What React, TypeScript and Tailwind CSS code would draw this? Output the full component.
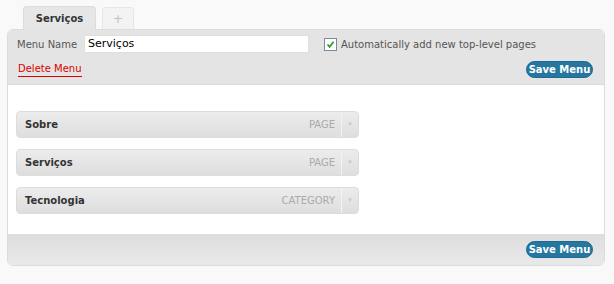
import React from "react";

const ITEMS = [
  { title: "Sobre", type: "PAGE" },
  { title: "Serviços", type: "PAGE" },
  { title: "Tecnologia", type: "CATEGORY" },
];

const SaveButton: React.FC = () => (
  <button className="h-[17px] w-[67px] whitespace-nowrap rounded-full border border-[#1d6a8e] bg-[#2577a0] text-[10px] font-bold leading-none text-white">
    Save Menu
  </button>
);

const MenuItem: React.FC<{ title: string; type: string }> = ({ title, type }) => (
  <div className="flex h-[27px] w-[343px] items-center rounded-[4px] border border-[#dcdcdc] bg-gradient-to-b from-[#ececec] to-[#dedede]">
    <span className="flex-1 pl-[8px] text-[10px] font-bold text-[#333]">{title}</span>
    <span className="pr-[6px] text-[10px] text-[#aaa]">{type}</span>
    <div className="flex h-full w-[17px] items-center justify-center border-l border-[#f3f3f3] text-[7px] text-[#c8c8c8]">
      ▾
    </div>
  </div>
);

const App: React.FC = () => {
  return (
    <div className="h-[284px] w-[614px] bg-[#f9f9f9] pt-[6px] font-['DejaVu_Sans',Verdana,sans-serif]">
      {/* tabs */}
      <div className="flex items-end gap-[6px] pl-[23px]">
        <div className="relative z-10 -mb-px flex h-[24px] w-[73px] items-center justify-center rounded-t-[4px] border border-b-0 border-[#dcdcdc] bg-[#e6e6e6] text-[10px] font-bold text-[#333]">
          Serviços
        </div>
        <div className="flex h-[22px] w-[32px] items-center justify-center rounded-t-[4px] border border-b-0 border-[#e6e6e6] bg-[#f3f3f3] text-[13px] text-[#c4c4c4]">
          +
        </div>
      </div>

      {/* menu box */}
      <div className="ml-[7px] w-[598px] overflow-hidden rounded-[6px] border border-[#dcdcdc] bg-white">
        <div className="h-[54px] bg-[#e4e4e4] px-[9px] pt-[5px]">
          <div className="flex items-center">
            <label className="w-[67px] text-[10px] text-[#555]">Menu Name</label>
            <div className="flex h-[18px] w-[225px] items-center border border-[#dfdfdf] bg-white pl-[3px] text-[11px] text-black">
              Serviços
            </div>
            <div className="ml-[15px] flex items-center">
              <div className="flex h-[13px] w-[13px] items-center justify-center border border-[#7a8a99] bg-white">
                <svg width="9" height="9" viewBox="0 0 9 9">
                  <path d="M1.5 4.5 L3.6 6.8 L7.6 1.8" fill="none" stroke="#2e9c2e" strokeWidth="1.8" />
                </svg>
              </div>
              <span className="ml-[4px] text-[10px] text-[#555]">Automatically add new top-level pages</span>
            </div>
          </div>
          <div className="mt-[8px] flex items-center justify-between pr-[2px]">
            <span className="ml-[1px] border-b border-[#d00] pb-[1px] text-[10px] leading-[13px] text-[#d00]">
              Delete Menu
            </span>
            <SaveButton />
          </div>
        </div>

        <div className="flex h-[150px] flex-col gap-[11px] border-t border-[#dcdcdc] px-[8px] pt-[26px]">
          {ITEMS.map((it) => (
            <MenuItem key={it.title} title={it.title} type={it.type} />
          ))}
        </div>

        <div className="flex h-[31px] items-center justify-end bg-gradient-to-b from-[#dddddd] to-[#e9e9e9] pr-[11px]">
          <SaveButton />
        </div>
      </div>
    </div>
  );
};

export default App;
